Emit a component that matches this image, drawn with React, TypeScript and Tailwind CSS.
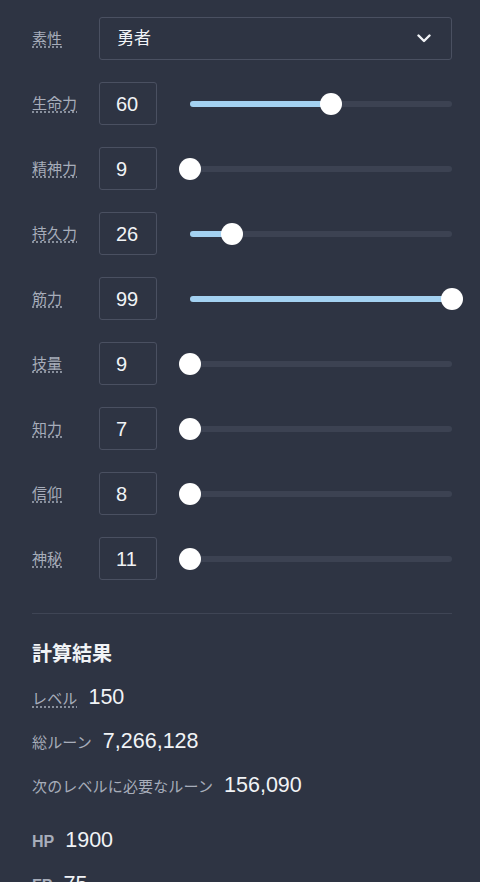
import React from "react";

const stats = [
  { label: "生命力", value: 60, pct: 53.8 },
  { label: "精神力", value: 9, pct: 0 },
  { label: "持久力", value: 26, pct: 15.9 },
  { label: "筋力", value: 99, pct: 100 },
  { label: "技量", value: 9, pct: 0 },
  { label: "知力", value: 7, pct: 0 },
  { label: "信仰", value: 8, pct: 0 },
  { label: "神秘", value: 11, pct: 0 },
];

function Label({ children }: { children: React.ReactNode }) {
  return (
    <div className="w-[67px] shrink-0 text-[15px] leading-[20px] text-[#a7adba]">
      <span className="underline decoration-dotted decoration-[#a7adba] underline-offset-[3px]">
        {children}
      </span>
    </div>
  );
}

function Slider({ pct }: { pct: number }) {
  return (
    <div className="relative ml-[33px] h-[22px] flex-1">
      <div className="absolute left-0 right-0 top-[8px] h-[6px] rounded-full bg-[#3c4252]" />
      <div
        className="absolute left-0 top-[8px] h-[6px] rounded-full bg-[#a3d1f1]"
        style={{ width: `${pct}%` }}
      />
      <div
        className="absolute top-0 h-[22px] w-[22px] -translate-x-1/2 rounded-full bg-white"
        style={{ left: `${pct}%` }}
      />
    </div>
  );
}

function Result({
  label,
  value,
  underline,
  bold,
}: {
  label: string;
  value: string;
  underline?: boolean;
  bold?: boolean;
}) {
  return (
    <div className="flex h-[28px] items-baseline gap-[11px]">
      <span
        className={
          (bold ? "text-[16px] font-bold " : "text-[15px] tracking-[0.15px] ") +
          "leading-[20px] text-[#a7adba] " +
          (underline ? "underline decoration-dotted underline-offset-[3px]" : "")
        }
      >
        {label}
      </span>
      <span className="text-[21.5px] leading-[28px] text-[#f1f3f6]">{value}</span>
    </div>
  );
}

export default function App() {
  return (
    <div className="h-[882px] w-full overflow-hidden bg-[#2e3443] pl-8 pr-[28px] pt-[17px] font-['Liberation_Sans','Noto_Sans_CJK_JP',sans-serif] text-[#f1f3f6]">
      <div className="flex flex-col gap-[22px]">
        <div className="flex h-[43px] items-center">
          <Label>素性</Label>
          <div className="flex h-[43px] flex-1 items-center justify-between rounded-[3px] border border-[#4a5061] pl-[17px] pr-[20px]">
            <span className="text-[17px] leading-none text-[#f1f3f6]">勇者</span>
            <svg width="14" height="9" viewBox="0 0 14 9" fill="none">
              <path
                d="M1.5 1.5 L7 7 L12.5 1.5"
                stroke="#f1f3f6"
                strokeWidth="2.4"
                strokeLinecap="round"
                strokeLinejoin="round"
              />
            </svg>
          </div>
        </div>
        {stats.map((s) => (
          <div key={s.label} className="flex h-[43px] items-center">
            <Label>{s.label}</Label>
            <div className="flex h-[43px] w-[58px] shrink-0 items-center rounded-[3px] border border-[#4a5061] pl-[16px] text-[20px] leading-none text-[#f1f3f6]">
              {s.value}
            </div>
            <Slider pct={s.pct} />
          </div>
        ))}
      </div>

      <div className="mt-[33px] h-px w-full bg-[#3f4555]" />

      <h2 className="mt-[26px] text-[20px] font-bold leading-[28px] text-[#f1f3f6]">計算結果</h2>

      <div className="mt-[15px] flex flex-col gap-[16px]">
        <Result label="レベル" value="150" underline />
        <Result label="総ルーン" value="7,266,128" />
        <Result label="次のレベルに必要なルーン" value="156,090" />
      </div>

      <div className="mt-[27px] flex flex-col gap-[16px]">
        <Result label="HP" value="1900" bold />
        <Result label="FP" value="75" bold />
      </div>
    </div>
  );
}
